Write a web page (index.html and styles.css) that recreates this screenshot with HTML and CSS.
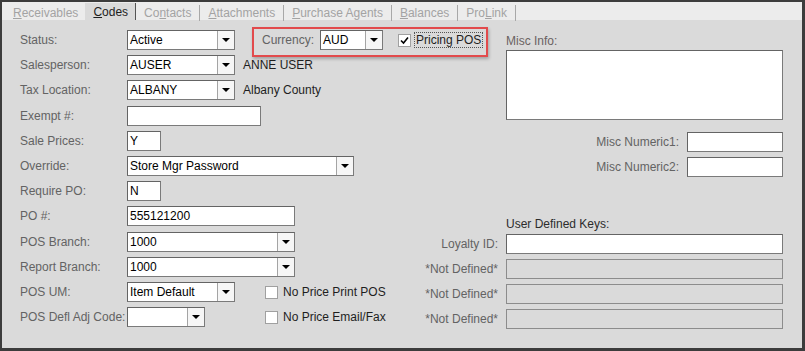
FILE: index.html
```html
<!DOCTYPE html>
<html lang="en">
<head>
    <meta charset="UTF-8" />
    <title>Customer Codes</title>
    <link rel="stylesheet" href="styles.css">
</head>
<body>
    <div class="window">
        <div class="tabs">
            <span class="tab"><u>R</u>eceivables</span>
            <span class="tab active"><u>C</u>odes</span>
            <span class="tab">Co<u>n</u>tacts</span>
            <span class="tab"><u>A</u>ttachments</span>
            <span class="tab"><u>P</u>urchase Agents</span>
            <span class="tab"><u>B</u>alances</span>
            <span class="tab">Pro<u>L</u>ink</span>
        </div>

        <div class="panel">
            <div class="left">
                <div class="row">
                    <label class="label">Status:</label>
                    <div class="select w108"><span class="value">Active</span><span class="arrow"></span></div>
                    <div class="currency">
                        <span class="label-inline">Currency:</span>
                        <div class="select w63"><span class="value">AUD</span><span class="arrow"></span></div>
                        <span class="check checked">
                            <svg width="9" height="9" viewBox="0 0 9 9"><path d="M1 4.5 L3.5 7 L8 1.5" fill="none" stroke="#000" stroke-width="1.6"/></svg>
                        </span>
                        <span class="focus-text">Pricing POS</span>
                    </div>
                </div>
                <div class="row">
                    <label class="label">Salesperson:</label>
                    <div class="select w108"><span class="value">AUSER</span><span class="arrow"></span></div>
                    <span class="desc">ANNE USER</span>
                </div>
                <div class="row">
                    <label class="label">Tax Location:</label>
                    <div class="select w108"><span class="value">ALBANY</span><span class="arrow"></span></div>
                    <span class="desc">Albany County</span>
                </div>
                <div class="row">
                    <label class="label">Exempt #:</label>
                    <div class="input w133"></div>
                </div>
                <div class="row">
                    <label class="label">Sale Prices:</label>
                    <div class="input w33">Y</div>
                </div>
                <div class="row">
                    <label class="label">Override:</label>
                    <div class="select w226"><span class="value">Store Mgr Password</span><span class="arrow"></span></div>
                </div>
                <div class="row">
                    <label class="label">Require PO:</label>
                    <div class="input w33">N</div>
                </div>
                <div class="row">
                    <label class="label">PO #:</label>
                    <div class="input w167">555121200</div>
                </div>
                <div class="row">
                    <label class="label">POS Branch:</label>
                    <div class="select w167"><span class="value">1000</span><span class="arrow"></span></div>
                </div>
                <div class="row">
                    <label class="label">Report Branch:</label>
                    <div class="select w167"><span class="value">1000</span><span class="arrow"></span></div>
                </div>
                <div class="row">
                    <label class="label">POS UM:</label>
                    <div class="select w108"><span class="value">Item Default</span><span class="arrow"></span></div>
                    <span class="check opt1"></span>
                    <span class="check-text">No Price Print POS</span>
                </div>
                <div class="row">
                    <label class="label">POS Defl Adj Code:</label>
                    <div class="select w78"><span class="value"></span><span class="arrow"></span></div>
                    <span class="check opt2"></span>
                    <span class="check-text">No Price Email/Fax</span>
                </div>
            </div>

            <div class="right">
                <div class="misc">
                    <div class="label-top">Misc Info:</div>
                    <div class="textarea"></div>
                </div>
                <div class="num-rows">
                    <div class="rrow"><span class="rlabel">Misc Numeric1:</span><div class="input w95"></div></div>
                    <div class="rrow"><span class="rlabel">Misc Numeric2:</span><div class="input w95"></div></div>
                </div>
                <div class="keys">
                    <div class="keys-title">User Defined Keys:</div>
                    <div class="rrow"><span class="rlabel">Loyalty ID:</span><div class="input w276"></div></div>
                    <div class="rrow"><span class="rlabel">*Not Defined*</span><div class="input w276 disabled"></div></div>
                    <div class="rrow"><span class="rlabel">*Not Defined*</span><div class="input w276 disabled"></div></div>
                    <div class="rrow"><span class="rlabel">*Not Defined*</span><div class="input w276 disabled"></div></div>
                </div>
            </div>
        </div>
    </div>
</body>
</html>
```

FILE: styles.css
```css
* {
    box-sizing: border-box;
}
body {
    margin: 0;
    font-family: 'Liberation Sans', Arial, sans-serif;
    font-size: 12px;
    background: #fff;
}
.window {
    width: 805px;
    height: 351px;
    border: 2px solid #3c3c3c;
    border-right-width: 3px;
    border-bottom-width: 3px;
    background: #dadada;
    overflow: hidden;
}

/* Tabs */
.tabs {
    height: 18px;
    background: #ececec;
    display: flex;
    align-items: flex-start;
    padding: 3px 0 0 3px;
}
.tab {
    padding: 0 8px;
    color: #a3a3a3;
    line-height: 16px;
    border-right: 1px solid #a8a8a8;
}
.tab:first-child {
    border-right: none;
    padding-right: 7px;
}
.tab.active {
    background: #dadada;
    color: #1e1e1e;
    height: 17px;
    margin-top: -2px;
    padding-top: 2px;
    padding-right: 7px;
    line-height: 15px;
    border-right: 1px solid #555;
}

/* Panel */
.panel {
    display: flex;
    height: 328px;
}
.left {
    width: 413px;
    flex-shrink: 0;
    padding: 10px 0 0 18px;
    display: grid;
    grid-auto-rows: 21px;
    row-gap: 4.2px;
    align-content: start;
}
.row {
    display: flex;
    align-items: flex-start;
    height: 21px;
}
.label {
    width: 107px;
    flex-shrink: 0;
    color: #636363;
    line-height: 20px;
}
.desc {
    margin-left: 8px;
    color: #1e1e1e;
    line-height: 20px;
}

/* Fields */
.input,
.select,
.textarea {
    height: 20px;
    background: #fff;
    border: 1px solid #7a7a7a;
    border-top-color: #646464;
    border-left-color: #646464;
    color: #000;
    flex-shrink: 0;
}
.input {
    padding-left: 2px;
    line-height: 18px;
}
.input.disabled {
    background: #dadada;
    border-color: #8c8c8c;
}
.select {
    display: flex;
}
.select .value {
    flex: 1;
    padding-left: 2px;
    line-height: 18px;
    white-space: nowrap;
    overflow: hidden;
}
.select .arrow {
    width: 17px;
    border-left: 1px solid #a4a4a4;
    background: #f6f6f6;
    display: flex;
    align-items: center;
    justify-content: center;
}
.select .arrow::after {
    content: '';
    border-left: 4px solid transparent;
    border-right: 4px solid transparent;
    border-top: 4px solid #000;
}
.w33 { width: 34px; }
.w63 { width: 63px; }
.w78 { width: 78px; }
.w95 { width: 96px; }
.w108 { width: 108px; }
.w133 { width: 134px; }
.w167 { width: 168px; }
.w226 { width: 227px; }
.w276 { width: 277px; }

/* Checkboxes */
.check {
    width: 13px;
    height: 13px;
    background: #fff;
    border: 1px solid #a0a0a0;
    flex-shrink: 0;
    margin-top: 4px;
    display: flex;
    align-items: center;
    justify-content: center;
}
.check.opt1 { margin-left: 30px; }
.check.opt2 { margin-left: 60px; }
.check-text {
    margin-left: 5px;
    color: #1e1e1e;
    line-height: 20px;
}

/* Currency highlight */
.currency {
    display: flex;
    align-items: flex-start;
    width: 236px;
    height: 30px;
    margin: -3px 0 -7px 17px;
    padding: 1px 0 0 8px;
    border: 2px solid #e24a4c;
    box-shadow: 1px 2px 3px rgba(0, 0, 0, 0.25);
    flex-shrink: 0;
}
.label-inline {
    width: 58px;
    color: #636363;
    line-height: 20px;
}
.currency .check {
    margin-left: 15px;
    margin-top: 4px;
}
.focus-text {
    margin-left: 3px;
    margin-top: 2px;
    padding: 0 1px;
    height: 16px;
    line-height: 14px;
    border: 1px dotted #555;
    color: #1e1e1e;
}

/* Right column */
.right {
    width: 368px;
    padding-top: 14px;
    display: flex;
    flex-direction: column;
    align-items: flex-end;
}
.misc {
    width: 277px;
}
.label-top {
    color: #6a6262;
    line-height: 14px;
    margin-bottom: 2px;
}
.textarea {
    width: 277px;
    height: 70px;
}
.num-rows {
    margin-top: 12px;
    display: flex;
    flex-direction: column;
    gap: 5px;
}
.rrow {
    display: flex;
    align-items: center;
    justify-content: flex-end;
    height: 20px;
}
.rlabel {
    color: #636363;
    margin-right: 8px;
}
.keys {
    margin-top: 40px;
    display: flex;
    flex-direction: column;
    align-items: flex-end;
    gap: 5px;
}
.keys-title {
    width: 277px;
    color: #2c2c2c;
    line-height: 14px;
    margin-bottom: -2px;
}
```
